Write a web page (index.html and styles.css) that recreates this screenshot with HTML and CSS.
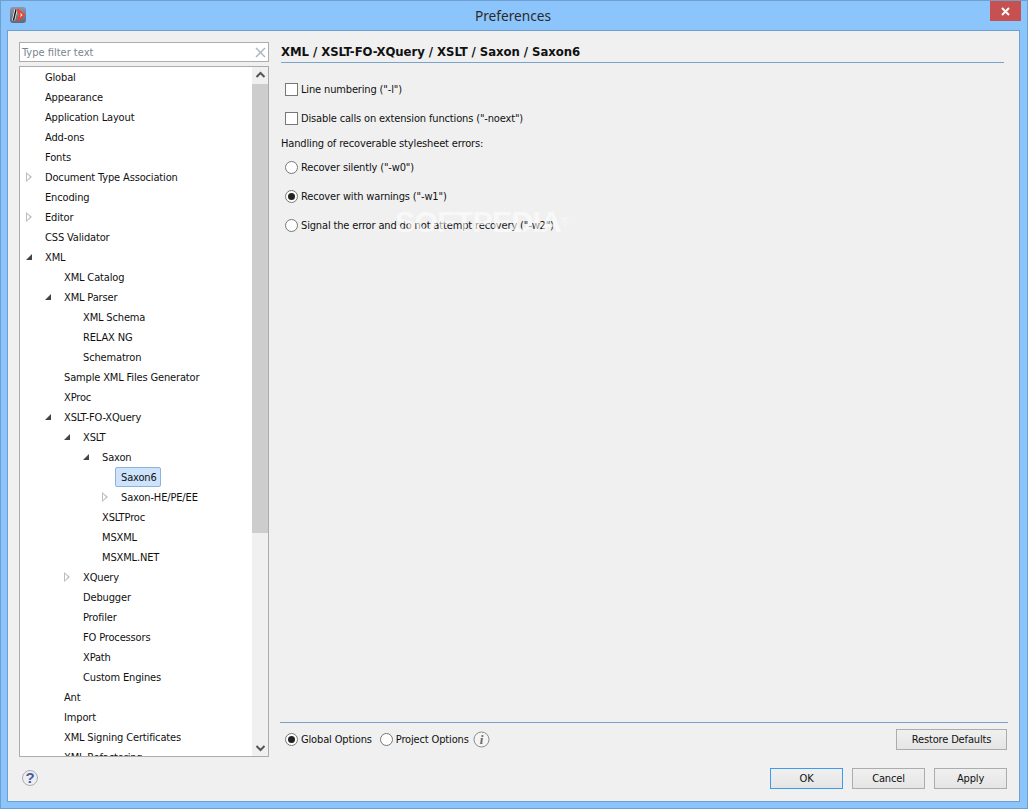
FILE: index.html
```html
<!DOCTYPE html>
<html lang="en">
<head>
<meta charset="utf-8">
<title>Preferences</title>
<link rel="stylesheet" href="styles.css">
</head>
<body>
<div class="window">
  <header class="titlebar">
    <svg class="app-icon" width="16" height="16" viewBox="0 0 16 16">
      <defs>
        <linearGradient id="appbg" x1="0" y1="0" x2="0" y2="1">
          <stop offset="0" stop-color="#8f97ab"/>
          <stop offset="1" stop-color="#5f6880"/>
        </linearGradient>
      </defs>
      <rect x="0" y="0" width="16" height="16" rx="3" fill="url(#appbg)"/>
      <path d="M3.5 13.5 L6 2.5" stroke="#f4f4f4" stroke-width="3" fill="none"/>
      <path d="M3.5 13.5 L6 2.5" stroke="#111" stroke-width="1.4" fill="none"/>
      <path d="M7.5 2.5 L14 8 L7.5 13.5 L10 8 Z" fill="#fff" stroke="#f0432a" stroke-width="1.7" stroke-linejoin="miter"/>
    </svg>
    <div class="title">Preferences</div>
    <button class="close" aria-label="Close">
      <svg width="9" height="9" viewBox="0 0 9 9"><path d="M1 1 L8 8 M8 1 L1 8" stroke="#fff" stroke-width="2"/></svg>
    </button>
  </header>
  <div class="client">
    <div class="columns">
      <aside class="left">
        <div class="filter">
          <span class="filter-text">Type filter text</span>
          <svg width="11" height="11" viewBox="0 0 11 11"><path d="M1 1 L10 10 M10 1 L1 10" stroke="#a9b4bd" stroke-width="1.4"/></svg>
        </div>
        <div class="tree">
          <ul class="rows">
            <li class="row l0"><i class="tw"></i><span>Global</span></li>
            <li class="row l0"><i class="tw"></i><span>Appearance</span></li>
            <li class="row l0"><i class="tw"></i><span>Application Layout</span></li>
            <li class="row l0"><i class="tw"></i><span>Add-ons</span></li>
            <li class="row l0"><i class="tw"></i><span>Fonts</span></li>
            <li class="row l0"><i class="tw closed"></i><span>Document Type Association</span></li>
            <li class="row l0"><i class="tw"></i><span>Encoding</span></li>
            <li class="row l0"><i class="tw closed"></i><span>Editor</span></li>
            <li class="row l0"><i class="tw"></i><span>CSS Validator</span></li>
            <li class="row l0"><i class="tw open"></i><span>XML</span></li>
            <li class="row l1"><i class="tw"></i><span>XML Catalog</span></li>
            <li class="row l1"><i class="tw open"></i><span>XML Parser</span></li>
            <li class="row l2"><i class="tw"></i><span>XML Schema</span></li>
            <li class="row l2"><i class="tw"></i><span>RELAX NG</span></li>
            <li class="row l2"><i class="tw"></i><span>Schematron</span></li>
            <li class="row l1"><i class="tw"></i><span>Sample XML Files Generator</span></li>
            <li class="row l1"><i class="tw"></i><span>XProc</span></li>
            <li class="row l1"><i class="tw open"></i><span>XSLT-FO-XQuery</span></li>
            <li class="row l2"><i class="tw open"></i><span>XSLT</span></li>
            <li class="row l3"><i class="tw open"></i><span>Saxon</span></li>
            <li class="row l4"><i class="tw"></i><span class="selected">Saxon6</span></li>
            <li class="row l4"><i class="tw closed"></i><span>Saxon-HE/PE/EE</span></li>
            <li class="row l3"><i class="tw"></i><span>XSLTProc</span></li>
            <li class="row l3"><i class="tw"></i><span>MSXML</span></li>
            <li class="row l3"><i class="tw"></i><span>MSXML.NET</span></li>
            <li class="row l2"><i class="tw closed"></i><span>XQuery</span></li>
            <li class="row l2"><i class="tw"></i><span>Debugger</span></li>
            <li class="row l2"><i class="tw"></i><span>Profiler</span></li>
            <li class="row l2"><i class="tw"></i><span>FO Processors</span></li>
            <li class="row l2"><i class="tw"></i><span>XPath</span></li>
            <li class="row l2"><i class="tw"></i><span>Custom Engines</span></li>
            <li class="row l1"><i class="tw"></i><span>Ant</span></li>
            <li class="row l1"><i class="tw"></i><span>Import</span></li>
            <li class="row l1"><i class="tw"></i><span>XML Signing Certificates</span></li>
            <li class="row l1"><i class="tw"></i><span>XML Refactoring</span></li>
          </ul>
          <div class="scrollbar">
            <svg width="17" height="17" viewBox="0 0 17 17"><path d="M4.5 10 L8.5 6 L12.5 10" stroke="#555" stroke-width="2" fill="none"/></svg>
            <div class="track"><div class="thumb"></div></div>
            <svg width="17" height="17" viewBox="0 0 17 17"><path d="M4.5 7 L8.5 11 L12.5 7" stroke="#555" stroke-width="2" fill="none"/></svg>
          </div>
        </div>
      </aside>
      <main class="right">
        <h1 class="heading">XML / XSLT-FO-XQuery / XSLT / Saxon / Saxon6</h1>
        <div class="options">
          <label class="opt first"><i class="check"></i>Line numbering ("-l")</label>
          <label class="opt"><i class="check"></i>Disable calls on extension functions ("-noext")</label>
          <div class="group-label">Handling of recoverable stylesheet errors:</div>
          <label class="opt tight"><i class="radio"></i>Recover silently ("-w0")</label>
          <label class="opt"><i class="radio on"></i>Recover with warnings ("-w1")</label>
          <label class="opt"><i class="radio"></i>Signal the error and do not attempt recovery ("-w2")</label>
          <div class="watermark">SOFTPEDIA<sup>®</sup></div>
        </div>
        <div class="scope">
          <label class="scope-opt"><i class="radio on"></i>Global Options</label>
          <label class="scope-opt"><i class="radio"></i>Project Options</label>
          <svg class="info" width="17" height="17" viewBox="0 0 17 17">
            <circle cx="8.5" cy="8.5" r="7.5" fill="#f4f4f4" stroke="#8a8a8a"/>
            <text x="8.5" y="13" text-anchor="middle" class="info-i">i</text>
          </svg>
          <button class="btn restore">Restore Defaults</button>
        </div>
      </main>
    </div>
    <footer class="footer">
      <svg class="help" width="18" height="18" viewBox="0 0 18 18">
        <circle cx="9" cy="9" r="7.5" fill="#eceef2" stroke="#a9adb5"/>
        <text x="9" y="14" text-anchor="middle" class="help-q">?</text>
      </svg>
      <div class="actions">
        <button class="btn primary">OK</button>
        <button class="btn">Cancel</button>
        <button class="btn">Apply</button>
      </div>
    </footer>
  </div>
</div>
</body>
</html>
```
FILE: styles.css
```css
* { box-sizing: border-box; }
html, body { margin: 0; padding: 0; }
body {
  width: 1028px;
  height: 809px;
  overflow: hidden;
  font-family: "DejaVu Sans Condensed", "Liberation Sans", sans-serif;
  font-size: 11px;
  letter-spacing: -0.15px;
  color: #111;
}
.window {
  width: 1028px;
  height: 809px;
  display: flex;
  flex-direction: column;
  background: #8cc5fb;
  border: 1px solid #6f9fcc;
}
.titlebar {
  height: 29px;
  flex: none;
  display: grid;
  grid-template-columns: 1fr auto 1fr;
  align-items: start;
  position: relative;
}
.app-icon { margin: 6px 0 0 9px; }
.title {
  font-family: "Noto Sans", sans-serif;
  font-size: 13.7px;
  letter-spacing: 0;
  line-height: 30px;
  margin-left: -2px;
  color: #2a2a2a;
}
.close {
  justify-self: end;
  width: 31px;
  height: 20px;
  margin-right: 6px;
  padding: 0;
  border: 0;
  background: #c75050;
  display: flex;
  align-items: center;
  justify-content: center;
}
.client {
  flex: 1;
  margin: 0 7px 6px 6px;
  background: #f0f0f0;
  border: 1px solid #6f9fcc;
  display: flex;
  flex-direction: column;
  padding: 11px 13px 0 11px;
  min-height: 0;
}
.columns {
  display: grid;
  grid-template-columns: 250px 1fr;
  column-gap: 12px;
  height: 715px;
}
.left { display: flex; flex-direction: column; gap: 4px; min-height: 0; }
.filter {
  height: 20px;
  flex: none;
  background: #fff;
  border: 1px solid #acacac;
  display: flex;
  align-items: center;
  justify-content: space-between;
  padding: 0 2px 0 2px;
}
.filter-text { color: #7b8590; letter-spacing: 0; }
.tree {
  flex: 1;
  min-height: 0;
  background: #fff;
  border: 1px solid #acacac;
  overflow: hidden;
  display: flex;
}
.rows {
  list-style: none;
  margin: 0;
  padding: 0;
  flex: 1;
  min-width: 0;
}
.row {
  height: 20px;
  display: flex;
  align-items: center;
  white-space: nowrap;
}
.row span { padding: 2px 3px 0; line-height: 18px; }
.l0 { padding-left: 3px; }
.l1 { padding-left: 22px; }
.l2 { padding-left: 41px; }
.l3 { padding-left: 60px; }
.l4 { padding-left: 79px; }
.tw {
  width: 19px;
  height: 20px;
  flex: none;
  position: relative;
}
.closed::before {
  content: "";
  position: absolute;
  left: 3px;
  top: 5px;
  border-left: 6px solid #bdbdbd;
  border-top: 5px solid transparent;
  border-bottom: 5px solid transparent;
}
.closed::after {
  content: "";
  position: absolute;
  left: 4px;
  top: 7px;
  border-left: 3px solid #fff;
  border-top: 3px solid transparent;
  border-bottom: 3px solid transparent;
}
.open::before {
  content: "";
  position: absolute;
  left: 3px;
  top: 7px;
  border-bottom: 6px solid #444;
  border-left: 6px solid transparent;
}
.row .selected {
  background: #cde3fb;
  border: 1px solid #8fb2da;
  border-radius: 2px;
  height: 20px;
  line-height: 18px;
  padding: 1px 2px 0 5px;
  margin-left: -3px;
  min-width: 46px;
}
.scrollbar {
  width: 16px;
  flex: none;
  display: flex;
  flex-direction: column;
  background: #f0f0f0;
}
.track { flex: 1; min-height: 0; }
.thumb { height: 449px; background: #cdcdcd; }
.right { display: flex; flex-direction: column; min-width: 0; }
.heading {
  margin: 0;
  width: 723px;
  font-size: 13px;
  font-weight: 700;
  letter-spacing: -0.05px;
  line-height: 20px;
  height: 21px;
  border-bottom: 1px solid #7ba2c9;
}
.options {
  flex: 1;
  min-height: 0;
  position: relative;
  display: flex;
  flex-direction: column;
  align-items: flex-start;
}
.opt {
  display: flex;
  align-items: center;
  height: 20px;
  margin-top: 9px;
  padding-left: 4px;
}
.opt.first { margin-top: 16px; }
.opt.tight { margin-top: 4px; }
.group-label { height: 20px; line-height: 20px; margin-top: 5px; padding-top: 1px; }
.check {
  width: 13px;
  height: 13px;
  margin-right: 3px;
  background: #fff;
  border: 1px solid #777;
  flex: none;
}
.radio {
  width: 13px;
  height: 13px;
  margin-right: 3px;
  flex: none;
  background: #fff;
  border: 1px solid #777;
  border-radius: 50%;
  display: flex;
  align-items: center;
  justify-content: center;
}
.radio.on::before {
  content: "";
  width: 7px;
  height: 7px;
  border-radius: 50%;
  background: #222;
}
.watermark {
  position: absolute;
  left: 114px;
  top: 143px;
  font-family: "Liberation Sans", sans-serif;
  font-size: 30px;
  font-weight: 700;
  letter-spacing: -0.6px;
  line-height: 32px;
  color: rgba(255, 255, 255, 0.6);
}
.watermark sup { font-size: 10px; vertical-align: top; font-weight: 400; }
.scope {
  flex: none;
  height: 35px;
  margin: 0 -2px 0 -1px;
  border-top: 1px solid #7ba2c9;
  display: flex;
  align-items: center;
  padding: 6px 1px 7px 5px;
  gap: 8px;
}
.scope-opt { display: flex; align-items: center; }
.info { margin-left: -4px; }
.info-i { font-family: "Liberation Serif", serif; font-size: 13px; font-weight: 700; font-style: italic; fill: #666; }
.btn {
  width: 73px;
  height: 21px;
  padding: 0 0 0 0;
  font: inherit;
  letter-spacing: -0.15px;
  color: #111;
  background: linear-gradient(#f0f0f0, #e5e5e5);
  border: 1px solid #acacac;
}
.btn.primary { border-color: #3c9bee; }
.btn.restore { width: 111px; margin-left: auto; }
.footer {
  flex: 1;
  display: flex;
  align-items: flex-start;
  justify-content: space-between;
  padding: 11px 0 0 2px;
  margin-right: -1px;
}
.help { margin-top: 1px; }
.help-q { font-family: "Liberation Sans", sans-serif; font-size: 15px; font-weight: 700; fill: #4a5a9c; }
.actions { display: flex; gap: 9px; }
```
